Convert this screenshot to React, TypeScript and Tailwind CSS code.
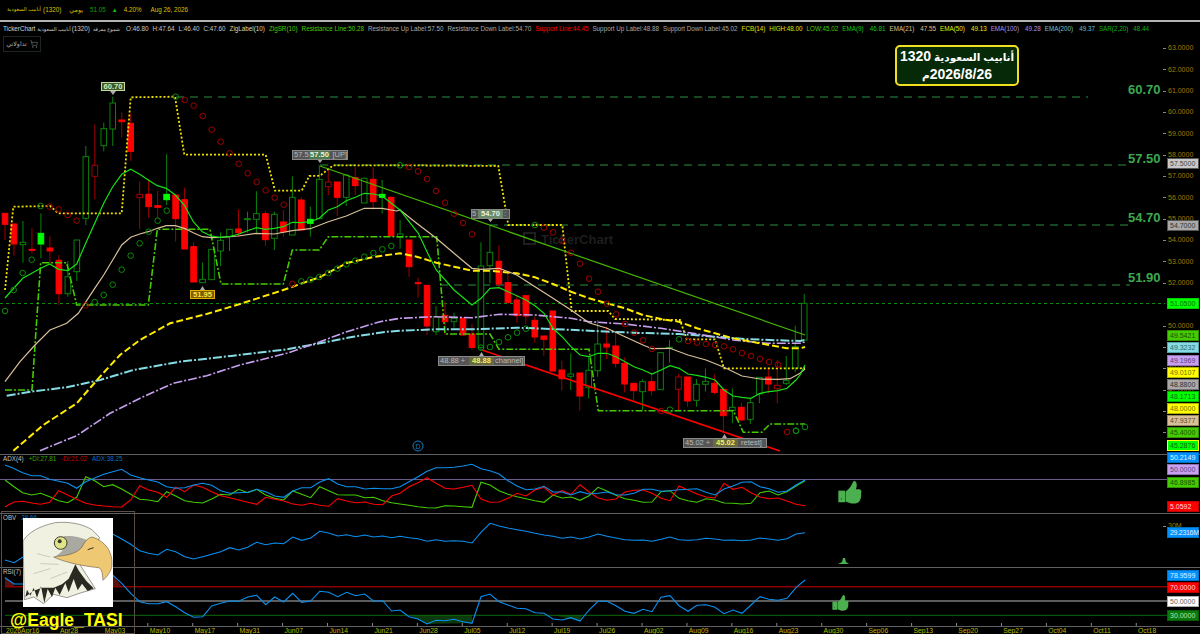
import { ShoppingCart } from "lucide-react";

type Pt = [number, number];
type Candle = [string, number, number, number, number];

// points were read off 3x crops, these turn them back into page pixels
const at = (ox: number, oy: number, pts: Pt[]): Pt[] => pts.map(([x, y]) => [ox + x / 3, oy + y / 3] as Pt);
const line = (pts: Pt[]) => pts.map(([x, y]) => `${x.toFixed(1)},${y.toFixed(1)}`).join(" ");
const priceY = (p: number) => 326 - (p - 50) * 21.35;

// g hollow green, r solid red, G solid bright green, R hollow red: kind, high, top, bottom, low
const candlesA: Candle[] = [
  ["r",400,400,433,480],["r",430,432,492,527],["g",423,487,494,548],["r",445,508,510,520],["G",400,460,492,535],
  ["r",467,504,513,550],["r",525,541,641,675],["g",543,590,641,650],["g",480,480,575,603],["g",198,230,415,435],
  ["R",133,256,289,358],["g",128,146,197,214],["g",50,69,147,198],["r",97,120,125,172],["r",100,130,214,243],
  ["R",304,343,353,448],["r",297,343,380,414],["r",332,377,382,414],["G",223,343,359,375],["r",345,345,416,485],
  ["r",323,359,507,507],["r",487,500,606,606],["g",548,598,608,608],["g",508,508,599,599],["g",457,481,513,558],
  ["g",448,448,470,513],["r",388,447,458,470],["g",395,416,418,458],["g",334,401,418,458],["r",392,401,479,498],
  ["g",395,403,475,510],["r",390,426,455,470],["g",289,352,465,465],["r",352,360,450,450],["G",380,418,430,470],
  ["g",256,298,416,416],["R",265,306,320,346],["r",306,306,352,408],["g",285,285,352,378],["r",262,293,317,345],
  ["g",292,295,369,369],["r",262,298,365,390],["G",300,343,352,400],["r",350,352,468,468],
];
const candlesB: Candle[] = [
  ["g",240,282,292,326],["r",300,300,380,410],["r",413,428,430,473],["r",436,436,558,585],["g",498,530,575,585],
  ["r",485,526,545,585],["g",518,535,545,563],["r",534,534,585,585],["r",552,582,622,630],["g",307,378,622,630],
  ["g",256,337,377,430],["r",316,364,432,445],["r",392,428,487,493],["r",463,480,527,548],["r",467,467,528,552],
  ["r",530,541,591,608],["r",588,588,598,647],["r",513,513,693,693],["r",662,690,716,752],["g",640,702,709,750],
  ["r",699,699,768,812],["g",650,691,743,775],["g",540,612,692,710],["r",560,612,621,657],["r",572,618,670,683],
  ["r",652,670,732,757],["r",730,730,752,782],["g",718,725,755,810],["r",700,725,752,766],["g",638,638,749,749],
  ["g",600,622,625,668],["R",703,711,748,812],["r",711,711,783,800],["g",718,733,781,800],["g",686,724,733,755],
  ["r",703,730,757,763],["r",748,748,827,880],["g",745,802,811,850],["r",788,802,840,842],["g",775,788,838,852],
  ["g",712,712,762,790],["r",686,711,732,760],["R",660,736,746,790],["g",648,722,730,735],["g",557,620,684,697],
  ["g",462,490,600,600],
];

const ema9: Pt[] = [
  [5,298],
  ...at(0,80,[[68,595],[122,565],[149,552],[176,568],[203,572],[230,552],[257,490],[284,430],[311,370],[338,320],[365,283],[392,268],[419,283],[445,300],[472,317],[499,325],[526,345],[553,375],[580,425],[607,455],[634,468],[661,472],[688,470],[715,463],[742,452],[769,443],[796,448],[823,445],[850,440],[877,427],[904,428],[931,425],[958,415],[985,390],[1012,380],[1039,362],[1066,352],[1093,340],[1120,342],[1147,348],[1174,370]]),
  ...at(400,140,[[0,210],[55,280],[83,340],[109,390],[162,450],[216,495],[243,475],[270,445],[297,443],[324,455],[378,480],[405,497],[432,520],[459,565],[486,590],[513,620],[540,645],[567,650],[594,640],[621,640],[648,650],[675,665],[702,680],[729,690],[756,702],[783,690],[810,677],[837,685],[864,702],[891,706],[918,712],[945,720],[972,750],[999,768],[1026,772],[1053,775],[1080,760],[1107,755],[1134,752],[1161,745],[1188,720],[1200,705]]),
  [805,365],
];
const ema21: Pt[] = [
  ...at(0,290,[[15,275],[60,215],[105,165],[150,120],[200,100],[235,70]]),
  ...at(0,80,[[284,625],[311,585],[338,540],[365,495],[392,472],[419,462],[445,455],[472,445],[499,437],[526,437],[553,445],[580,458],[607,470],[634,473],[661,472],[715,468],[769,460],[823,462],[877,452],[931,446],[985,425],[1039,408],[1093,385],[1147,385],[1190,393]]),
  ...at(400,140,[[0,210],[50,250],[109,295],[162,340],[216,385],[243,388],[297,385],[350,405],[405,440],[459,475],[513,510],[567,548],[621,565],[675,590],[729,615],[756,626],[810,625],[864,645],[918,660],[972,682],[1026,708],[1080,717],[1134,718],[1170,716],[1200,700]]),
  [805,369],
];
const ema50: Pt[] = [
  ...at(0,290,[[40,482],[130,405],[230,340],[300,260],[360,195],[420,150],[510,100],[620,72],[720,42],[850,0]]),
  [320,277],[347,263],[373,257],
  ...at(400,140,[[0,340],[50,350],[109,368],[162,380],[216,392],[270,392],[350,400],[405,412],[459,432],[513,455],[567,475],[621,490],[675,505],[729,525],[783,537],[837,545],[891,565],[945,580],[1000,595],[1080,610],[1160,625],[1200,625]]),
  [805,347],
];
const ema100: Pt[] = [
  ...at(0,290,[[120,482],[230,437],[330,370],[430,320],[520,280],[620,257],[720,225],[860,190],[960,155],[1040,125],[1140,95],[1200,85]]),
  ...at(400,140,[[0,535],[100,530],[216,533],[300,523],[405,525],[513,535],[567,545],[675,552],[783,565],[891,582],[1000,600],[1100,610],[1200,610]]),
  [805,342],
];
const ema200: Pt[] = [
  ...at(0,290,[[20,317],[100,304],[200,292],[300,270],[400,240],[540,215],[700,197],[860,178],[960,160],[1060,140],[1160,125]]),
  ...at(400,140,[[0,572],[108,568],[216,568],[350,563],[459,567],[567,572],[700,578],[837,582],[945,590],[1050,598],[1200,603]]),
  [805,340],
];
const fcbHigh: Pt[] = [
  ...at(0,80,[[15,630],[40,380],[150,378],[175,400],[365,400],[392,52],[525,50],[553,224],[797,224],[825,332],[905,332],[928,288],[960,287],[1000,256],[1200,256]]),
  ...at(400,140,[[295,78],[325,255],[487,255],[515,513],[625,513],[645,537],[840,540],[860,598],[945,598],[972,685],[1200,685]]),
  [805,368],
];
const fcbLow: Pt[] = [
  [5,390],[32,390],
  ...at(0,80,[[110,720],[122,548],[200,548],[230,675],[445,675],[472,448],[630,448],[663,612],[850,612],[877,510],[958,510],[985,470],[1200,470]]),
  ...at(400,140,[[110,290],[135,582],[270,582],[297,628],[567,628],[595,812],[1000,812],[1030,877],[1085,877],[1110,852],[1200,852]]),
  [805,424],
];

const sarGreen: Pt[] = [
  ...at(0,80,[[15,693],[41,630],[68,579],[95,539],[122,378],[284,666],[311,645],[338,614],[365,569],[392,527],[419,490],[446,455],[473,422],[500,392],[527,50],[904,604],[931,599],[958,591],[985,579],[1012,566],[1039,553],[1066,542],[1093,530],[1120,519],[1147,508],[1174,498],[1200,256]]),
  ...at(400,140,[[243,623],[270,621],[297,606],[324,592],[351,578],[378,566],[405,255],[810,809],[837,598],[1188,872]]),
  [796,431],[805,427],
];
const sarRed: Pt[] = [
  ...at(0,80,[[149,380],[176,388],[203,405],[230,422],[257,676],[554,60],[581,77],[608,108],[635,149],[662,185],[689,220],[716,251],[743,280],[770,306],[797,331],[824,353],[851,374],[877,612]]),
  ...at(400,140,[[27,81],[54,94],[81,117],[108,153],[135,188],[162,221],[189,249],[216,283],[432,263],[459,277],[486,302],[513,338],[540,371],[567,416],[594,455],[621,491],[648,523],[675,552],[702,578],[729,601],[756,627],[783,813],[864,603],[891,608],[918,612],[945,615],[972,619],[999,628],[1026,639],[1053,648],[1080,657],[1107,666],[1134,674],[1161,876]]),
];

const adxBlue: Pt[] = [
  ...at(0,440,[[15,75],[40,85],[68,98],[95,107],[122,107],[149,118],[176,124],[203,130],[230,145],[257,125],[284,114],[311,103],[338,95],[365,88],[392,105],[419,113],[446,120],[473,126],[500,140],[527,145],[554,143],[581,135],[608,130],[635,136],[662,152],[689,160],[716,158],[743,157],[770,148],[797,155],[824,168],[851,172],[878,153],[905,143],[932,143],[959,126],[986,116],[1013,132],[1040,140],[1067,140],[1094,147],[1121,145],[1148,146],[1175,146]]),
  ...at(400,440,[[0,140],[27,125],[54,110],[81,94],[108,83],[135,83],[162,82],[189,78],[216,73],[243,86],[270,92],[297,102],[324,122],[351,138],[378,149],[405,147],[432,139],[459,156],[486,156],[513,165],[540,155],[567,162],[594,160],[621,156],[648,164],[675,165],[702,160],[729,148],[756,148],[783,154],[810,152],[837,149],[864,148],[891,146],[918,157],[945,165],[972,147],[999,138],[1026,127],[1053,125],[1080,140],[1107,146],[1134,157],[1161,153],[1188,135],[1215,120]]),
];
const adxGreen: Pt[] = [
  ...at(0,440,[[15,120],[42,140],[68,158],[95,165],[122,160],[149,170],[176,182],[203,188],[230,172],[257,110],[284,122],[311,140],[338,134],[365,147],[392,163],[419,178],[446,180],[473,185],[500,155],[527,168],[554,182],[581,187],[608,189],[635,177],[662,163],[689,165],[716,148],[743,158],[770,148],[797,165],[824,175],[851,180],[878,153],[905,163],[932,173],[959,140],[986,152],[1013,164],[1040,165],[1067,165],[1094,173],[1121,172],[1148,182],[1175,188]]),
  ...at(400,440,[[0,192],[27,196],[54,200],[81,203],[108,204],[135,197],[162,198],[189,200],[216,202],[243,127],[270,135],[297,152],[324,163],[351,170],[378,176],[405,182],[432,187],[459,165],[486,174],[513,171],[540,181],[567,167],[594,142],[621,153],[648,166],[675,176],[702,181],[729,187],[756,186],[783,155],[810,152],[837,175],[864,182],[891,187],[918,176],[945,180],[972,189],[999,190],[1026,192],[1053,190],[1080,158],[1107,153],[1134,165],[1161,155],[1188,138],[1215,122]]),
];
const adxRed: Pt[] = [
  ...at(0,440,[[15,200],[42,186],[68,184],[95,189],[122,193],[149,187],[176,152],[203,165],[230,178],[257,190],[284,195],[311,198],[338,200],[365,201],[392,180],[419,137],[446,150],[473,157],[500,172],[527,142],[554,155],[581,135],[608,142],[635,155],[662,167],[689,173],[716,180],[743,187],[770,193],[797,172],[824,178],[851,183],[878,192],[905,196],[932,190],[959,196],[986,199],[1013,176],[1040,183],[1067,188],[1094,186],[1121,193],[1148,194],[1175,168]]),
  ...at(400,440,[[0,160],[27,140],[54,128],[81,113],[108,130],[135,145],[162,147],[189,142],[216,136],[243,177],[270,187],[297,186],[324,175],[351,160],[378,168],[405,150],[432,142],[459,165],[486,152],[513,163],[540,134],[567,156],[594,174],[621,181],[648,177],[675,156],[702,151],[729,150],[756,160],[783,175],[810,182],[837,138],[864,150],[891,162],[918,171],[945,174],[972,130],[999,148],[1026,142],[1053,158],[1080,171],[1107,176],[1134,174],[1161,183],[1188,193],[1215,197]]),
];
const obv: Pt[] = [
  ...at(0,440,[[15,360],[42,368],[68,352],[200,310],[338,282],[365,297],[392,313],[419,332],[446,340],[473,345],[500,328],[527,335],[554,350],[581,357],[608,350],[635,343],[662,335],[689,323],[716,330],[743,322],[770,307],[797,314],[824,309],[851,311],[878,291],[905,301],[932,294],[959,274],[986,279],[1013,288],[1040,284],[1067,290],[1094,285],[1121,291],[1148,288],[1175,293]]),
  ...at(400,440,[[0,289],[27,293],[54,296],[81,304],[108,299],[135,304],[162,302],[189,304],[216,309],[243,277],[270,250],[297,258],[324,264],[351,269],[378,274],[405,280],[432,285],[459,289],[486,295],[513,291],[540,297],[567,291],[594,282],[621,289],[648,294],[675,299],[702,301],[729,300],[756,304],[783,298],[810,291],[837,299],[864,301],[891,299],[918,295],[945,297],[972,301],[999,300],[1026,302],[1053,300],[1080,294],[1107,297],[1134,301],[1161,296],[1188,282],[1215,278]]),
];
const rsi: Pt[] = [
  ...at(0,440,[[15,413],[42,432],[68,432],[200,425],[338,405],[365,430],[392,460],[419,485],[446,491],[473,491],[500,485],[527,500],[554,518],[581,532],[608,530],[635,498],[662,490],[689,483],[716,484],[743,471],[770,466],[797,494],[824,471],[851,486],[878,460],[905,487],[932,483],[959,454],[986,457],[1013,470],[1040,457],[1067,467],[1094,462],[1121,484],[1148,482],[1175,513]]),
  ...at(400,440,[[0,510],[27,530],[54,537],[81,552],[108,541],[135,542],[162,538],[189,545],[216,550],[243,470],[270,462],[297,485],[324,495],[351,505],[378,506],[405,518],[432,520],[459,537],[486,540],[513,533],[540,543],[567,510],[594,484],[621,484],[648,497],[675,514],[702,520],[729,508],[756,515],[783,472],[810,467],[837,497],[864,514],[891,496],[918,494],[945,502],[972,521],[999,510],[1026,520],[1053,495],[1080,470],[1107,478],[1134,481],[1161,475],[1188,443],[1215,420]]),
];

const CandleMark = ({ c, x, oy }: { c: Candle; x: number; oy: number }) => {
  const [kind, hi, top, bot, lo] = c;
  const y = (v: number) => oy + v / 3;
  const hollow = kind === "g" || kind === "R";
  const greenish = kind === "g" || kind === "G";
  const edge = greenish ? "#0b820b" : "#a00000";
  const fill = hollow ? "#000000" : kind === "G" ? "#00ff00" : "#ff0000";
  return (
    <g>
      <line x1={x} x2={x} y1={y(hi)} y2={y(lo)} stroke={edge} />
      <rect
        x={x - 2.8}
        y={y(top)}
        width={5.6}
        height={Math.max(y(bot) - y(top), 1)}
        fill={fill}
        stroke={hollow ? edge : fill}
      />
    </g>
  );
};

type Tag = { y: number; text: string; cls: string };

const mainTags: Tag[] = [
  { y: 163.5, text: "57.5000", cls: "bg-[#c8c8c8] text-[#444444] border-[#555555]" },
  { y: 225.5, text: "54.7000", cls: "bg-[#a8a8a8] text-[#333333] border-[#555555]" },
  { y: 303.5, text: "51.0500", cls: "bg-[#00ff00] text-[#0a6a0a] border-[#00d000]" },
  { y: 335.5, text: "49.5421", cls: "bg-[#44cc00] text-[#155000] border-[#2f8f00]" },
  { y: 347.5, text: "49.3232", cls: "bg-[#84dde4] text-[#2a6a70] border-[#5aa0a5]" },
  { y: 360, text: "49.1969", cls: "bg-[#c8a0f0] text-[#5a4080] border-[#8f70b0]" },
  { y: 372, text: "49.0107", cls: "bg-[#ffff00] text-[#707000] border-[#b0b000]" },
  { y: 384, text: "48.8800", cls: "bg-[#a8a8a8] text-[#333333] border-[#707070]" },
  { y: 396, text: "48.1713", cls: "bg-[#00ff00] text-[#0a6a0a] border-[#00b000]" },
  { y: 408.5, text: "48.0000", cls: "bg-[#ffff00] text-[#707000] border-[#b0b000]" },
  { y: 420.5, text: "47.9377", cls: "bg-[#d8c098] text-[#5a4a30] border-[#98845f]" },
  { y: 432.5, text: "45.4000", cls: "bg-[#44cc00] text-[#155000] border-[#2f8f00]" },
  { y: 445, text: "45.2876", cls: "bg-[#00ff00] text-[#0a6a0a] border-[#ffff00]" },
];
const adxTags: Tag[] = [
  { y: 457, text: "50.2149", cls: "bg-[#0090ff] text-[#e0f0ff] border-[#0070c0]" },
  { y: 469, text: "50.0000", cls: "bg-[#c8a0f0] text-[#5a4080] border-[#8f70b0]" },
  { y: 482, text: "46.8985", cls: "bg-[#44cc00] text-[#155000] border-[#2f8f00]" },
  { y: 506, text: "5.0592", cls: "bg-[#ff0000] text-[#ffd8d8] border-[#c00000]" },
];
const obvTags: Tag[] = [{ y: 532, text: "29.2316M", cls: "bg-[#0090ff] text-[#e0f0ff] border-[#0070c0] tracking-[-0.3px]" }];
const rsiTags: Tag[] = [
  { y: 575, text: "78.9599", cls: "bg-[#0090ff] text-[#e0f0ff] border-[#0070c0]" },
  { y: 587, text: "70.0000", cls: "bg-[#ff0000] text-[#ffd8d8] border-[#c00000]" },
  { y: 601, text: "50.0000", cls: "bg-[#ffffff] text-[#666666] border-[#aaaaaa]" },
  { y: 615, text: "30.0000", cls: "bg-[#0a7a0a] text-[#b0e0b0] border-[#0a5a0a]" },
];
const priceMarks = [63, 62, 61, 60, 59, 58, 57, 56, 55, 54, 53, 52, 50, 49, 48, 47, 46, 45];

const Axis = ({ top, tags, marks = [] }: { top: number; tags: Tag[]; marks?: { y: number; text: string }[] }) => (
  <div className="relative w-[37px] h-full">
    {marks.map((m) => (
      <div key={m.text} className="absolute left-0 flex items-center h-[10px]" style={{ top: m.y - top - 5 }}>
        <span className="w-[3px] h-px bg-[#888888] mr-[2px]" />
        <span className="text-[7px] text-[#a87800]">{m.text}</span>
      </div>
    ))}
    {tags.map((t) => (
      <div
        key={t.text + t.y}
        className={`absolute left-[4px] w-[32px] h-[11px] border text-[7px] leading-[9px] pl-[2px] whitespace-nowrap ${t.cls}`}
        style={{ top: t.y - top - 5.5 }}
      >
        {t.text}
      </div>
    ))}
  </div>
);

const legend: [string, string][] = [
  ["TickerChart", "text-[#d0d0d0]"],
  ["أنابيب السعودية", "text-[#c8c8c8] text-[5.2px] -ml-[2px]"],
  ["(1320)", "text-[#c8c8c8] -ml-[3px]"],
  ["شموع مفرقة", "text-[#c8c8c8] text-[5px] -ml-[1px]"],
  ["O:46.80", "text-[#c8c8c8] ml-[2px]"],
  ["H:47.64", "text-[#c8c8c8]"],
  ["L:46.40", "text-[#c8c8c8]"],
  ["C:47.60", "text-[#c8c8c8]"],
  ["ZigLabel(10)", "text-[#d8d8a0]"],
  ["ZigSR(10)", "text-[#44cc00]"],
  ["Resistance Line:50.28", "text-[#44cc00]"],
  ["Resistance Up Label:57.50", "text-[#a8a8a8]"],
  ["Resistance Down Label:54.70", "text-[#a8a8a8]"],
  ["Support Line:44.45", "text-[#ff0000]"],
  ["Support Up Label:48.88", "text-[#a8a8a8]"],
  ["Support Down Label:45.02", "text-[#a8a8a8]"],
  ["FCB(14)", "text-[#e0e000]"],
  ["HIGH:48.00", "text-[#e0e000]"],
  ["LOW:45.02", "text-[#44cc00]"],
  ["EMA(9)", "text-[#10c810]"],
  ["46.81", "text-[#10c810] ml-[2px]"],
  ["EMA(21)", "text-[#d8c098]"],
  ["47.55", "text-[#d8c098] ml-[2px]"],
  ["EMA(50)", "text-[#e8e800]"],
  ["49.13", "text-[#e8e800] ml-[2px]"],
  ["EMA(100)", "text-[#b090e0]"],
  ["49.28", "text-[#b090e0] ml-[2px]"],
  ["EMA(200)", "text-[#70c0d0]"],
  ["49.37", "text-[#70c0d0] ml-[2px]"],
  ["SAR(2,20)", "text-[#10b010]"],
  ["48.44", "text-[#10b010] ml-[1px]"],
];

const dates = ["2026Apr16", "Apr28", "May03", "May10", "May17", "May31", "Jun07", "Jun14", "Jun21", "Jun28", "Jul05", "Jul12", "Jul19", "Jul26", "Aug02", "Aug09", "Aug16", "Aug23", "Aug30", "Sep06", "Sep13", "Sep20", "Sep27", "Oct04", "Oct11", "Oct18"];

const ThumbUp = ({ className }: { className: string }) => (
  <svg viewBox="0 0 68 67" className={className}>
    <path d="M0,28 L20,28 L20,62 L0,62Z" fill="#4caf50" />
    <circle cx="9" cy="52" r="2" fill="#1c4a20" />
    <path d="M21,31 L31,22 C38,15 40,6 45,0 C52,-1 55,8 53,18 L51,24 L62,24 C68,26 68,32 66,38 C68,45 65,52 62,58 C58,66 45,67 35,65 L21,60Z" fill="#4caf50" />
  </svg>
);

const EagleLogo = () => (
  <svg viewBox="68 233 270 267" className="w-full h-full" preserveAspectRatio="none">
    <rect x="68" y="233" width="270" height="267" fill="#ffffff" />
    <path d="M68,302 C85,275 120,256 165,247 C205,243 245,250 275,268 L298,292 L270,345 L240,375 L285,445 L240,458 L200,472 L160,462 L130,490 L100,470 L72,478 Z" fill="#f1f1e2" stroke="#3a3a34" strokeWidth="1.5" />
    <path d="M190,288 C215,285 245,292 262,300 L245,330 L205,345 L165,348 C190,335 200,315 190,288Z" fill="#a9a9a2" />
    <path d="M75,470 L80,448 L90,466 L100,442 L110,472 L122,438 L132,488 L142,446 L155,470 L165,442 L178,464 L195,428 L205,456 L220,416 L232,450 L245,430 L262,452 L280,444 L258,422 L236,392 L225,372 L216,392 L205,415 L185,432 L160,442 L125,442 L98,452 Z" fill="#2a2a22" />
    <path d="M100,400 L150,385 M120,370 L175,372 M110,340 L150,350 M150,415 L200,395" stroke="#b8b8ac" strokeWidth="2" fill="none" />
    <path d="M245,320 C255,300 265,292 275,290 C310,300 338,330 335,375 C333,395 318,410 308,420 C306,400 306,388 295,382 C250,378 190,365 160,350 C190,345 225,345 245,320Z" fill="#efc873" stroke="#4a4030" strokeWidth="1.5" />
    <path d="M262,328 L280,322" stroke="#3a3020" strokeWidth="3" />
    <circle cx="181" cy="308" r="19" fill="#dfe48a" stroke="#3a3a2a" strokeWidth="3" />
    <circle cx="178" cy="303" r="6" fill="#3a3a2a" />
  </svg>
);

const App = () => (
  <div className="relative w-[1200px] h-[634px] bg-black overflow-hidden flex flex-col font-['Liberation_Sans','DejaVu_Sans',sans-serif]">
    {/* symbol bar */}
    <div className="h-[22px] shrink-0 border-b-2 border-[#b4b4b4] flex items-center pl-[7px] text-[6.3px] text-[#d8c000]">
      <span className="text-[5.3px]">أنابيب السعودية</span>
      <span className="ml-[2px]">(1320)</span>
      <span className="ml-[8px]">يومي</span>
      <span className="ml-[7px] text-[#0aa00a]">51.05</span>
      <span className="ml-[6px] text-[#10c010] text-[6px]">▲</span>
      <span className="ml-[6px]">4.20%</span>
      <span className="ml-[9px]">Aug 26, 2026</span>
    </div>

    {/* price panel */}
    <div className="relative h-[432px] shrink-0 flex">
      <svg width="1163" height="432" viewBox="0 22 1163 432" className="shrink-0 overflow-visible">
        <text x="541" y="244" fontSize="13" fontWeight="bold" fill="#1e1e1e">TickerChart</text>
        <rect x="524" y="233" width="11" height="11" fill="none" stroke="#1e1e1e" strokeWidth="2" />

        <line x1="176" x2="1088" y1="97" y2="97" stroke="#2f8f3f" strokeDasharray="8 6" />
        <line x1="320" x2="1130" y1="165" y2="165" stroke="#2f8f3f" strokeDasharray="8 6" />
        <line x1="490" x2="1130" y1="225" y2="225" stroke="#2f8f3f" strokeDasharray="8 6" />
        <line x1="440" x2="1130" y1="285" y2="285" stroke="#2f8f3f" strokeDasharray="8 6" />
        <line x1="0" x2="1165" y1="303.5" y2="303.5" stroke="#0c8c0c" strokeDasharray="3 3" />

        {candlesA.map((c, i) => (
          <CandleMark key={`a${i}`} c={c} x={5 + i * 8.98} oy={80} />
        ))}
        {candlesB.map((c, i) => (
          <CandleMark key={`b${i}`} c={c} x={5 + (i + 44) * 8.98} oy={140} />
        ))}

        <polyline points={line(fcbHigh)} fill="none" stroke="#f0e000" strokeWidth="1.8" strokeDasharray="2 2" />
        <polyline points={line(fcbLow)} fill="none" stroke="#44cc00" strokeWidth="1.6" strokeDasharray="7 2 2 2" />
        <polyline points={line(ema200)} fill="none" stroke="#84dde4" strokeWidth="2" strokeDasharray="9 2 2 2" />
        <polyline points={line(ema100)} fill="none" stroke="#c8a0f0" strokeWidth="1.6" strokeDasharray="9 2 2 2" />
        <polyline points={line(ema50)} fill="none" stroke="#ffea00" strokeWidth="2" strokeDasharray="7 3" />
        <polyline points={line(ema21)} fill="none" stroke="#d8c098" strokeWidth="1.2" />
        <polyline points={line(ema9)} fill="none" stroke="#16e016" strokeWidth="1.2" />

        <line x1="320" y1="166" x2="805" y2="335" stroke="#44b800" strokeWidth="1.2" />
        <line x1="482" y1="350" x2="780" y2="451" stroke="#ff0000" strokeWidth="1.6" />

        {sarGreen.map(([x, y]) => (
          <circle key={`sg${x}-${y}`} cx={x} cy={y} r="2.8" fill="none" stroke="#0c8c0c" />
        ))}
        {sarRed.map(([x, y]) => (
          <circle key={`sr${x}-${y}`} cx={x} cy={y} r="2.8" fill="none" stroke="#a00000" />
        ))}

        <circle cx="418" cy="446" r="5" fill="none" stroke="#1c7cc8" />
        <text x="418" y="449" fontSize="7" textAnchor="middle" fill="#1c7cc8">D</text>
        <path d="M110,91 L116,91 L113,95Z M200,290 L205,290 L202.5,286Z M317,159 L323,159 L320,163Z M488,219 L493,219 L490.5,222Z M479,356 L484,356 L481.5,352Z M722,438 L727,438 L724.5,434Z" fill="#a8a8a8" />
      </svg>
      <Axis
        top={22}
        tags={mainTags}
        marks={priceMarks.map((p) => ({ y: priceY(p), text: p.toFixed(4) }))}
      />

      {/* legend */}
      <div className="absolute left-[3px] top-[2px] flex items-center gap-[4px] text-[6.3px] leading-[10px] whitespace-nowrap">
        {legend.map(([t, c]) => (
          <span key={t + c} className={c}>{t}</span>
        ))}
      </div>
      <div className="absolute left-[3px] top-[14px] h-[16px] w-[38px] border border-[#1c2428] flex items-center justify-center gap-[3px] text-[6.3px] text-[#b0b0b0]">
        <span>تداولاتي</span>
        <ShoppingCart size={8} color="#707070" />
      </div>

      {/* title card */}
      <div dir="rtl" className="absolute left-[895px] top-[23px] w-[124px] h-[41px] border-2 border-[#f0e020] rounded-[5px] bg-[#062a08] flex flex-col items-center justify-center text-white font-bold leading-[17px] whitespace-nowrap">
        <span className="text-[10.5px]">أنابيب السعودية <span className="text-[14px]">1320</span></span>
        <span className="text-[14px]">2026/8/26<span className="text-[10.5px]">م</span></span>
      </div>

      {/* level labels */}
      <span className="absolute left-[1128px] top-[58px] text-[13px] font-bold text-[#3da84d]">60.70</span>
      <span className="absolute left-[1128px] top-[127px] text-[13px] font-bold text-[#3da84d]">57.50</span>
      <span className="absolute left-[1128px] top-[186px] text-[13px] font-bold text-[#3da84d]">54.70</span>
      <span className="absolute left-[1128px] top-[246px] text-[13px] font-bold text-[#3da84d]">51.90</span>

      {/* zig labels */}
      <div className="absolute left-[101px] top-[60px] w-[24px] h-[9px] bg-[#3a5a28] border border-[#c8d8a0] text-[#d8e8b8] text-[7.5px] font-bold leading-[7px] text-center">60.70</div>
      <div className="absolute left-[190px] top-[268px] w-[25px] h-[9px] bg-[#7a5c00] border border-[#e0b000] text-[#ffe040] text-[7.5px] font-bold leading-[7px] text-center">51.95</div>
      <div className="absolute left-[292px] top-[128px] w-[56px] h-[10px] bg-[#555555] border border-[#888888] text-[#b8b8b8] text-[7.5px] leading-[8px] flex">
        <span className="w-[16px] pl-[1px]">57.5</span>
        <span className="w-[24px] bg-[#4a7a4a] text-[#e8f0e0] font-bold text-center">57.50</span>
        <span className="pl-[2px]">[UP]</span>
      </div>
      <div className="absolute left-[471px] top-[187px] w-[39px] h-[10px] bg-[#555555] border border-[#888888] text-[#b8b8b8] text-[7.5px] leading-[8px] flex">
        <span className="w-[6px]">5</span>
        <span className="w-[25px] bg-[#6a8a6a] text-[#e8f0e0] font-bold text-center">54.70</span>
        <span className="pl-[1px]">:</span>
      </div>
      <div className="absolute left-[438px] top-[334px] w-[87px] h-[10px] bg-[#555555] border border-[#888888] text-[#b8b8b8] text-[7.5px] leading-[8px] flex">
        <span className="w-[30px] pl-[1px]">48.88 +</span>
        <span className="w-[25px] bg-[#6a6a40] text-[#f0f060] font-bold text-center">48.88</span>
        <span className="pl-[1px]">channel]</span>
      </div>
      <div className="absolute left-[683px] top-[416px] w-[84px] h-[10px] bg-[#555555] border border-[#888888] text-[#b8b8b8] text-[7.5px] leading-[8px] flex">
        <span className="w-[29px] pl-[1px]">45.02 +</span>
        <span className="w-[25px] bg-[#6a6a40] text-[#f0f060] font-bold text-center">45.02</span>
        <span className="pl-[3px]">retest]</span>
      </div>
    </div>

    {/* ADX */}
    <div className="relative h-[59px] shrink-0 flex border-t border-[#606060]">
      <svg width="1163" height="58" viewBox="0 455 1163 58" className="shrink-0 overflow-visible">
        <line x1="0" x2="1167" y1="479.5" y2="479.5" stroke="#6a5a8a" />
        <polyline points={line(adxGreen)} fill="none" stroke="#44cc00" strokeWidth="1.1" />
        <polyline points={line(adxRed)} fill="none" stroke="#ff0000" strokeWidth="1.1" />
        <polyline points={line(adxBlue)} fill="none" stroke="#0a90f0" strokeWidth="1.1" />
      </svg>
      <Axis top={455} tags={adxTags} />
      <div className="absolute left-[3px] top-[-1px] flex gap-[5px] text-[6.3px] leading-[10px]">
        <span className="text-[#c0c0c0]">ADX(4)</span>
        <span className="text-[#3aa800]">+DI:27.81</span>
        <span className="text-[#c00000]">-DI:21.02</span>
        <span className="text-[#0a70c0]">ADX:38.25</span>
      </div>
      <ThumbUp className="absolute left-[838px] top-[26px] w-[24px] h-[23px]" />
    </div>

    {/* OBV */}
    <div className="relative h-[54px] shrink-0 flex border-t border-[#606060]">
      <svg width="1163" height="53" viewBox="0 514 1163 53" className="shrink-0 overflow-visible">
        <polyline points={line(obv)} fill="none" stroke="#0a90f0" strokeWidth="1.1" />
        <path d="M838,564 L842,562 L843,558 L845,558 L846,562 L849,564Z" fill="#4caf50" />
      </svg>
      <Axis top={514} tags={obvTags} marks={[{ y: 526, text: "30M" }]} />
      <div className="absolute left-[3px] top-[-1px] flex gap-[5px] text-[6.3px] leading-[10px]">
        <span className="text-[#c0c0c0]">OBV</span>
        <span className="text-[#0a70c0]">28.66</span>
      </div>
    </div>

    {/* RSI */}
    <div className="relative h-[59px] shrink-0 flex border-t border-[#606060]">
      <svg width="1163" height="58" viewBox="0 568 1163 58" className="shrink-0 overflow-visible">
        <path d="M5,577 L14,584 L14,587 L5,587Z M113,575 L122,587 L113,587Z" fill="#5a1010" />
        <path d="M409,615 L427,624 L472,623 L472,615Z M553,615 L580,621 L582,615Z" fill="#0c3a0c" />
        <line x1="5" x2="1167" y1="586.7" y2="586.7" stroke="#8c0000" strokeWidth="1.5" />
        <line x1="5" x2="1167" y1="601" y2="601" stroke="#b8b8b8" strokeWidth="1.2" />
        <line x1="5" x2="1167" y1="615.3" y2="615.3" stroke="#0a6a0a" />
        <polyline points={line(rsi)} fill="none" stroke="#0a90f0" strokeWidth="1.1" />
        {dates.map((d, i) => (
          <line key={d} x1={13 + i * 44.93} x2={13 + i * 44.93} y1="623" y2="626" stroke="#888888" />
        ))}
      </svg>
      <Axis top={568} tags={rsiTags} />
      <div className="absolute left-[3px] top-[-1px] text-[6.3px] leading-[10px] text-[#c0c0c0]">RSI(7)</div>
      <ThumbUp className="absolute left-[832px] top-[27px] w-[17px] h-[16px]" />
    </div>

    {/* dates */}
    <div className="h-[8px] flex border-t border-[#606060] pl-[13px] text-[6.8px] leading-[7px] text-[#b8b800] whitespace-nowrap">
      {dates.map((d, i) => (
        <span key={d} className={i === 0 ? "w-[44.93px] shrink-0 -ml-[7px] mr-[7px]" : "w-[44.93px] shrink-0 pl-[2px]"}>
          {d}
        </span>
      ))}
    </div>

    {/* eagle watermark */}
    <div className="absolute left-[1px] top-[511px] w-[134px] h-[123px] border border-[#5a5048]">
      <div className="absolute left-[21px] top-[6px] w-[90px] h-[89px]">
        <EagleLogo />
      </div>
      <div className="absolute left-[8px] top-[97px] text-[17.6px] font-bold leading-[22px] text-[#ffff00] whitespace-nowrap">@Eagle_TASI</div>
    </div>
  </div>
);

export default App;
